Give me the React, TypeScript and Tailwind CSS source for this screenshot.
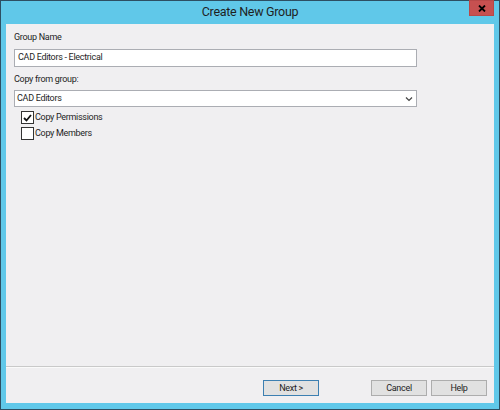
import React from "react";

export default function App() {
  return (
    <div
      className="w-[500px] h-[410px] border border-[#2d4f63] bg-[#60c8e9] flex flex-col text-[#1e1e1e]"
      style={{ fontFamily: 'Roboto, "Noto Sans", "Liberation Sans", sans-serif' }}
    >
      {/* title bar */}
      <div className="relative h-[23px] flex items-center justify-center shrink-0">
        <span className="text-[12.5px] tracking-[-0.3px] text-[#1f1f1f] leading-none">Create New Group</span>
        <button className="absolute right-[5px] top-[-1px] w-[25px] h-[16px] bg-[#c75050] border border-[#b84848] flex items-center justify-center">
          <svg width="8" height="7" viewBox="0 0 8 7">
            <path d="M1 0.5 L7 6.5 M7 0.5 L1 6.5" stroke="#000" strokeWidth="1.8" />
          </svg>
        </button>
      </div>

      {/* body */}
      <div className="flex-1 mx-[5px] mb-[6px] bg-[#f0eff1] flex flex-col text-[9px] tracking-[-0.3px]">
        <div className="flex-1 pl-[8px] pr-[77px] pt-[7px] flex flex-col">
          <label className="leading-[12px]">Group Name</label>
          <div className="mt-[6px] h-[18px] bg-white border border-[#abadb3] flex items-center px-[3px]">
            CAD Editors - Electrical
          </div>
          <label className="leading-[12px] mt-[6px]">Copy from group:</label>
          <div className="mt-[5px] h-[17px] bg-white border border-[#abadb3] flex items-center justify-between pl-[2px] pr-[3px]">
            <span>CAD Editors</span>
            <svg width="8" height="6" viewBox="0 0 8 6">
              <path d="M1 1.5 L4 4.5 L7 1.5" stroke="#444" strokeWidth="1.2" fill="none" />
            </svg>
          </div>
          <div className="mt-[3px] ml-[7px] flex items-center gap-[1px] h-[15px]">
            <span className="w-[13px] h-[13px] bg-white border border-[#333] flex items-center justify-center">
              <svg width="9" height="8" viewBox="0 0 9 8">
                <path d="M1 4 L3.5 6.5 L8 1" stroke="#111" strokeWidth="1.8" fill="none" />
              </svg>
            </span>
            <span>Copy Permissions</span>
          </div>
          <div className="mt-[1px] ml-[7px] flex items-center gap-[1px] h-[15px]">
            <span className="w-[13px] h-[13px] bg-white border border-[#333]" />
            <span>Copy Members</span>
          </div>
        </div>

        {/* separator + buttons */}
        <div className="h-[2px] border-t border-[#c9c9c9] border-b border-b-[#fafafa]" />
        <div className="h-[35px] flex items-start pt-[12px] pr-[7px]">
          <div className="flex-1" />
          <button className="w-[56px] h-[16px] bg-[#e1e1e1] border border-[#3c7fb1] leading-none">
            Next &gt;
          </button>
          <button className="ml-[52px] w-[56px] h-[16px] bg-[#e1e1e1] border border-[#adadad] leading-none">
            Cancel
          </button>
          <button className="ml-[4px] w-[56px] h-[16px] bg-[#e1e1e1] border border-[#adadad] leading-none">
            Help
          </button>
        </div>
      </div>
    </div>
  );
}
